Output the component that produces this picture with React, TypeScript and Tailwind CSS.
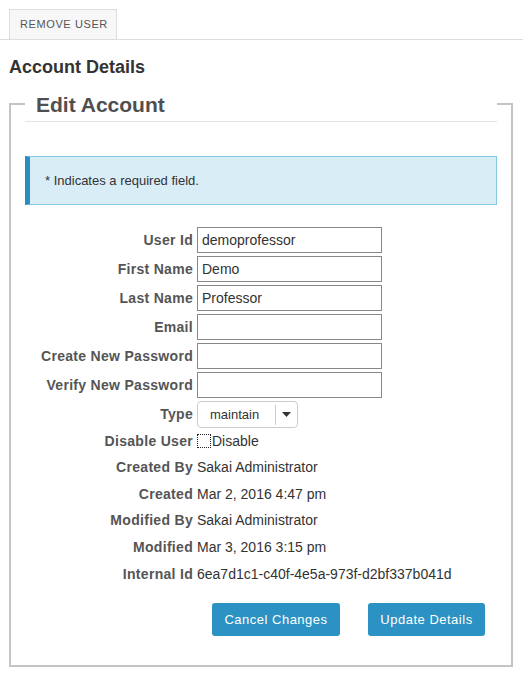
import React from "react";

const font = { fontFamily: '"Liberation Sans", Arial, sans-serif' };

function Label({ children }: { children: React.ReactNode }) {
  return (
    <div className="w-[168px] shrink-0 text-right text-[14px] font-bold tracking-[0.3px] text-[#555]">
      {children}
    </div>
  );
}

function InputRow({ label, value }: { label: string; value: string }) {
  return (
    <div className="flex h-[26px] items-center gap-[4px]">
      <Label>{label}</Label>
      <div className="flex h-[26px] w-[185px] items-center border border-[#888] px-[4px] text-[14px] text-[#333]">
        {value}
      </div>
    </div>
  );
}

function StaticRow({ label, value }: { label: string; value: string }) {
  return (
    <div className="flex h-[26.7px] items-center gap-[4px]">
      <Label>{label}</Label>
      <div className="text-[14px] text-[#333] whitespace-nowrap">{value}</div>
    </div>
  );
}

export default function App() {
  return (
    <div className="min-h-[673px] w-[523px] bg-white" style={font}>
      <div className="border-b border-[#ddd] pl-[9px] pt-[9px]">
        <div className="flex h-[30px] w-[108px] items-center border border-b-0 border-[#ddd] bg-[#f7f7f7] pl-[10px] text-[11px] tracking-[0.6px] text-[#555]">
          REMOVE USER
        </div>
      </div>
      <h2 className="ml-[9px] mt-[17px] text-[18px] font-bold leading-[20px] text-[#333]">
        Account Details
      </h2>
      <div className="ml-[9px] mt-[9px] w-[504px]">
        <div className="flex h-[36px]">
          <div className="mt-[17px] w-[16px] border-l-2 border-t-2 border-[#c4c4c4]" />
          <div className="flex-1 border-b border-[#e3e3e3] pl-[11px] pt-[6px] text-[21px] font-bold leading-[26px] text-[#4f4f4f]">
            Edit Account
          </div>
          <div className="mt-[17px] w-[16px] border-r-2 border-t-2 border-[#c4c4c4]" />
        </div>
        <div className="border-2 border-t-0 border-[#c4c4c4] px-[14px] pb-[29px] pt-[34px]">
          <div className="border border-l-[5px] border-[#84c8e6] border-l-[#2b8dbf] bg-[#d9edf7] py-[15px] pl-[15px] text-[13px] leading-[17px] text-[#333]">
            * Indicates a required field.
          </div>
          <div className="mt-[22px] flex flex-col">
            <div className="flex flex-col gap-[3px]">
              <InputRow label="User Id" value="demoprofessor" />
              <InputRow label="First Name" value="Demo" />
              <InputRow label="Last Name" value="Professor" />
              <InputRow label="Email" value="" />
              <InputRow label="Create New Password" value="" />
              <InputRow label="Verify New Password" value="" />
              <div className="flex h-[27px] items-center gap-[4px]">
                <Label>Type</Label>
                <div className="flex h-[27px] w-[101px] items-center rounded-[4px] border border-[#ccc] bg-white">
                  <span className="pl-[12px] text-[13px] text-[#333]">maintain</span>
                  <span className="ml-auto h-[20px] w-px bg-[#ccc]" />
                  <span className="flex w-[21px] justify-center">
                    <svg width="9" height="5" viewBox="0 0 9 5">
                      <path d="M0 0 H9 L4.5 5 Z" fill="#333" />
                    </svg>
                  </span>
                </div>
              </div>
            </div>
            <div className="flex h-[26px] items-center gap-[4px]">
              <Label>Disable User</Label>
              <div className="flex items-center text-[14px] text-[#333]">
                <span className="mr-[1px] box-border h-[14px] w-[14px] border border-dotted border-[#222] bg-white" />
                Disable
              </div>
            </div>
            <StaticRow label="Created By" value="Sakai Administrator" />
            <StaticRow label="Created" value="Mar 2, 2016 4:47 pm" />
            <StaticRow label="Modified By" value="Sakai Administrator" />
            <StaticRow label="Modified" value="Mar 3, 2016 3:15 pm" />
            <StaticRow label="Internal Id" value="6ea7d1c1-c40f-4e5a-973f-d2bf337b041d" />
          </div>
          <div className="mt-[16px] flex gap-[28px] pl-[187px]">
            <button className="h-[33px] w-[128px] rounded-[3px] bg-[#2b92c3] text-[13px] tracking-[0.5px] text-white">
              Cancel Changes
            </button>
            <button className="h-[33px] w-[117px] rounded-[3px] bg-[#2b92c3] text-[13px] tracking-[0.5px] text-white">
              Update Details
            </button>
          </div>
        </div>
      </div>
    </div>
  );
}
